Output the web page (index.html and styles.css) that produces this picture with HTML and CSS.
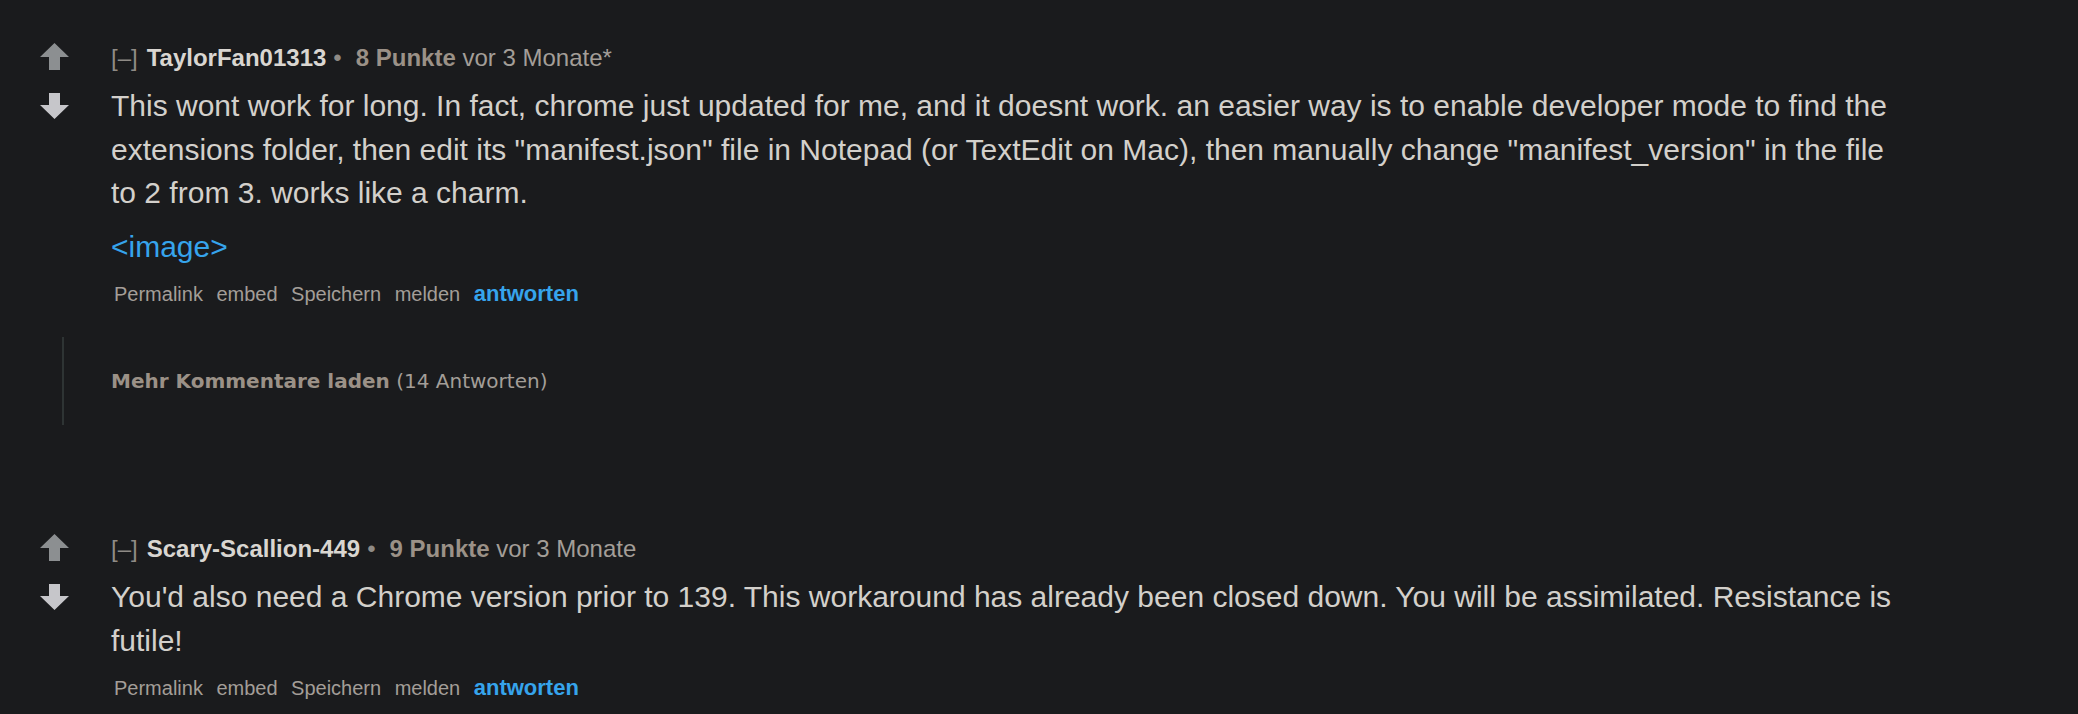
FILE: index.html
```html
<!DOCTYPE html>
<html lang="de">
<head>
  <meta charset="UTF-8">
  <title>Kommentare</title>
  <link rel="stylesheet" href="styles.css">
</head>
<body>
  <div class="commentarea">

    <div class="comment">
      <div class="midcol">
        <svg class="arrow up" viewBox="0 0 31 28" aria-label="upvote"><polygon points="15.5,1 30,15 21,15 21,28 10,28 10,15 1,15"/></svg>
        <svg class="arrow down" viewBox="0 0 31 26" aria-label="downvote"><polygon points="10,0 21,0 21,12 30,12 15.5,26 1,12 10,12"/></svg>
      </div>
      <div class="entry">
        <p class="tagline"><a class="expand">[–]</a><a class="author">TaylorFan01313</a><span class="dot">•</span><span class="score">8 Punkte</span> <time>vor 3 Monate</time>*</p>
        <div class="md">
          <p>This wont work for long. In fact, chrome just updated for me, and it doesnt work. an easier way is to enable developer mode to find the extensions folder, then edit its "manifest.json" file in Notepad (or TextEdit on Mac), then manually change "manifest_version" in the file to 2 from 3. works like a charm.</p>
          <p><a class="link">&lt;image&gt;</a></p>
        </div>
        <ul class="buttons">
          <li><a>Permalink</a></li>
          <li><a>embed</a></li>
          <li><a>Speichern</a></li>
          <li><a>melden</a></li>
          <li><a class="reply">antworten</a></li>
        </ul>
      </div>
      <div class="child">
        <span class="morecomments"><a>Mehr Kommentare laden</a> <span class="count">(14 Antworten)</span></span>
      </div>
    </div>

    <div class="comment">
      <div class="midcol">
        <svg class="arrow up" viewBox="0 0 31 28" aria-label="upvote"><polygon points="15.5,1 30,15 21,15 21,28 10,28 10,15 1,15"/></svg>
        <svg class="arrow down" viewBox="0 0 31 26" aria-label="downvote"><polygon points="10,0 21,0 21,12 30,12 15.5,26 1,12 10,12"/></svg>
      </div>
      <div class="entry">
        <p class="tagline"><a class="expand">[–]</a><a class="author">Scary-Scallion-449</a><span class="dot">•</span><span class="score">9 Punkte</span> <time>vor 3 Monate</time></p>
        <div class="md">
          <p>You'd also need a Chrome version prior to 139. This workaround has already been closed down. You will be assimilated. Resistance is futile!</p>
        </div>
        <ul class="buttons">
          <li><a>Permalink</a></li>
          <li><a>embed</a></li>
          <li><a>Speichern</a></li>
          <li><a>melden</a></li>
          <li><a class="reply">antworten</a></li>
        </ul>
      </div>
    </div>

  </div>
</body>
</html>
```

FILE: styles.css
```css
/* dark comment thread */
:root {
  --bg:        #1a1b1d;
  --text:      #d3d0cb;
  --muted:     #a39e98;
  --dim:       #8f8b86;
  --score:     #9b9187;
  --link:      #36a4ec;
  --thread:    #2e3434;
  --arrow-up:  #8c8f91;
  --arrow-dn:  #c6c6ca;
}

html, body {
  margin: 0;
  min-height: 100%;
  background-color: var(--bg);
}

body {
  font-family: "Liberation Sans", Arial, sans-serif;
  color: var(--text);
}

a {
  text-decoration: none;
  cursor: pointer;
}

.commentarea {
  padding-top: 42px;
}

/* one comment: vote arrows | entry, child below */
.comment {
  display: grid;
  grid-template-columns: 31px 1fr;
  column-gap: 41px;
  padding-left: 39px;
}
.comment + .comment {
  margin-top: 108px;
}

.midcol {
  display: flex;
  flex-direction: column;
  gap: 23px;
}
.arrow {
  display: block;
  width: 31px;
}
.arrow.up {
  height: 28px;
  fill: var(--arrow-up);
}
.arrow.down {
  height: 26px;
  fill: var(--arrow-dn);
}

.tagline {
  margin: 0;
  font-size: 24px;
  line-height: 32px;
  color: var(--muted);
  white-space: nowrap;
}
.expand {
  color: var(--dim);
  margin-right: 9px;
}
.author {
  color: #d9d6d1;
  font-weight: bold;
}
.dot {
  color: var(--dim);
  margin: 0 14px 0 7px;
}
.score {
  color: var(--score);
  font-weight: bold;
}

.md {
  margin-top: 10px;
  max-width: 1800px;
  font-size: 30px;
  line-height: 43.5px;
}
.md p {
  margin: 0 0 10px;
}
.link {
  color: var(--link);
}

.buttons {
  list-style: none;
  display: flex;
  align-items: baseline;
  gap: 13.5px;
  margin: 0;
  padding: 2px 0 0 3px;
  font-size: 20px;
  line-height: 28px;
}
.buttons a {
  color: var(--muted);
}
.buttons .reply {
  color: var(--link);
  font-weight: bold;
  font-size: 22px;
}

/* collapsed replies */
.child {
  grid-column: 1 / -1;
  margin: 29px 0 0 23px;
  padding: 30px 0 30px 47px;
  border-left: 2px solid var(--thread);
  font-family: "DejaVu Sans", Verdana, sans-serif;
  font-size: 20px;
  line-height: 28px;
}
.morecomments a {
  color: var(--score);
  font-weight: bold;
}
.morecomments .count {
  color: var(--muted);
}
```
